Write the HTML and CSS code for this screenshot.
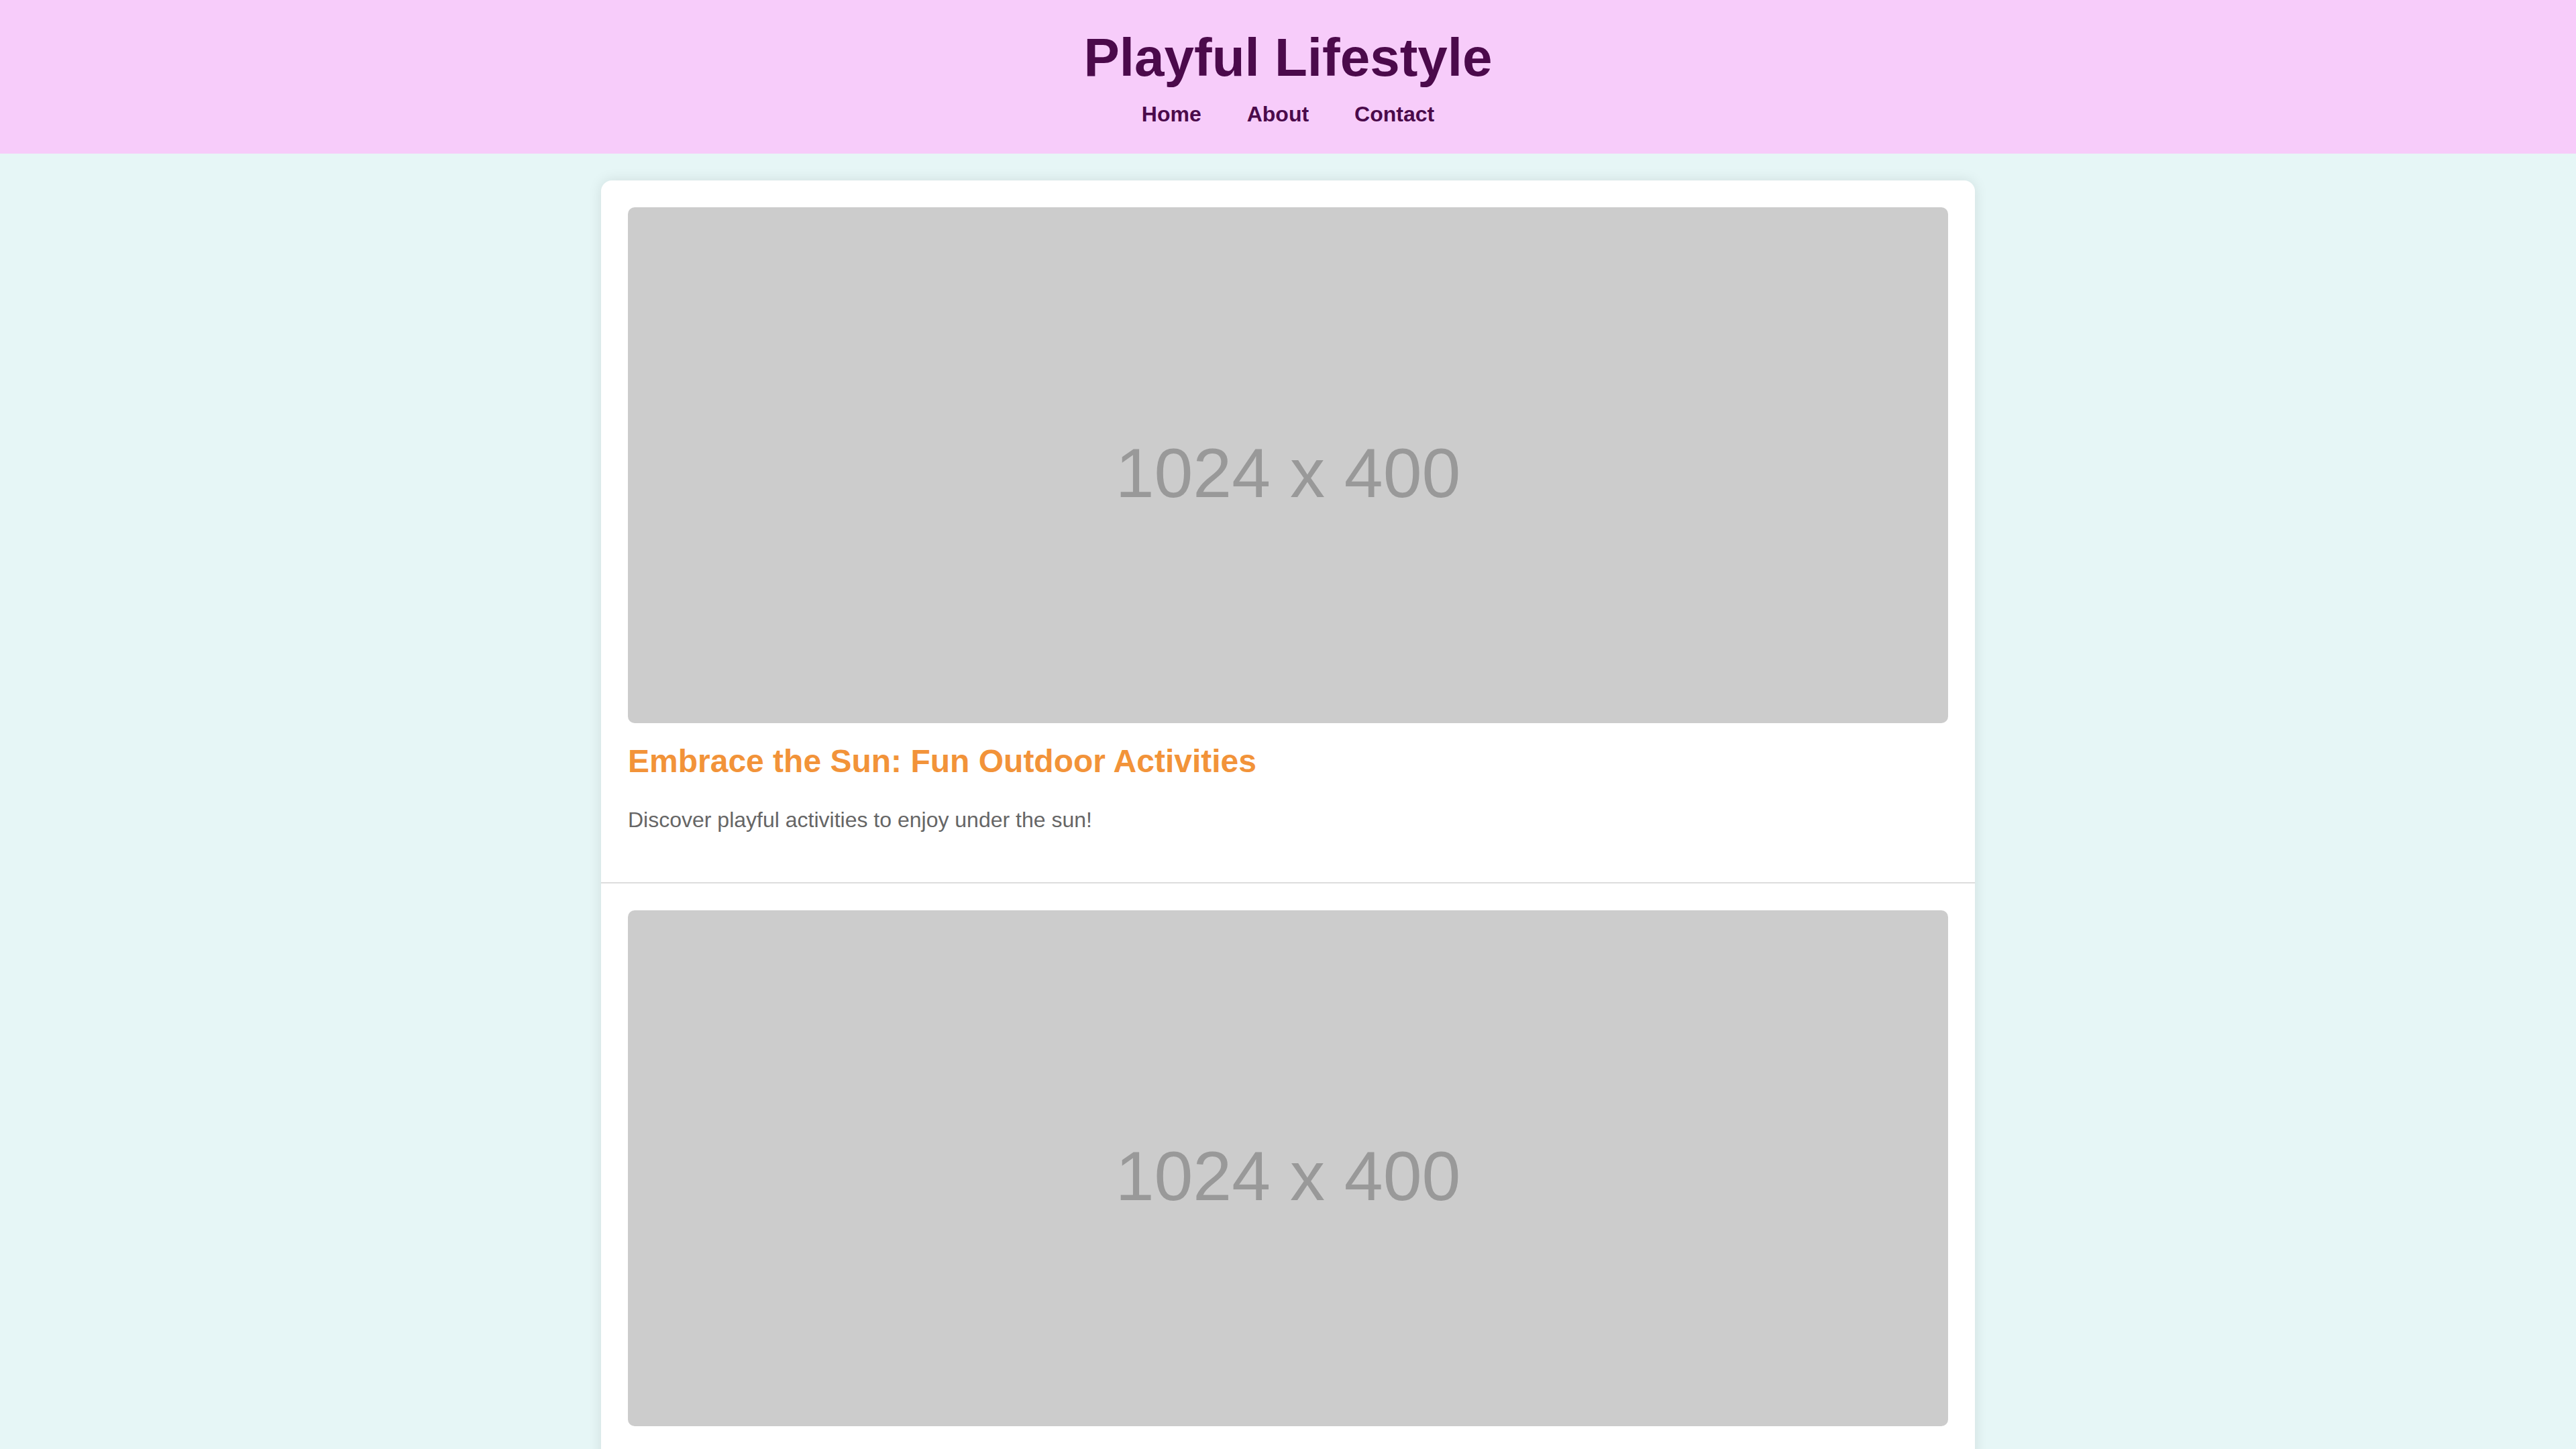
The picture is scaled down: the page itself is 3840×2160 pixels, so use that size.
FILE: index.html
```html
<!DOCTYPE html>
<html lang="en">
<head>
<meta charset="utf-8">
<title>Playful Lifestyle</title>
<link rel="stylesheet" href="styles.css">
</head>
<body>
<header class="site-header">
  <h1 class="site-title">Playful Lifestyle</h1>
  <nav class="site-nav">
    <a href="#" class="nav-link">Home</a>
    <a href="#" class="nav-link">About</a>
    <a href="#" class="nav-link">Contact</a>
  </nav>
</header>
<main class="content">
  <article class="post">
    <div class="placeholder"><span class="placeholder-text">1024 x 400</span></div>
    <h2 class="post-title">Embrace the Sun: Fun Outdoor Activities</h2>
    <p class="post-excerpt">Discover playful activities to enjoy under the sun!</p>
  </article>
  <article class="post">
    <div class="placeholder"><span class="placeholder-text">1024 x 400</span></div>
    <h2 class="post-title">Creative Crafts for Cozy Afternoons</h2>
    <p class="post-excerpt">Simple, colourful projects to brighten up your day.</p>
  </article>
</main>
</body>
</html>
```

FILE: styles.css
```css
html, body {
  margin: 0;
  padding: 0;
}
body {
  background: #e6f6f6;
  font-family: "Liberation Sans", Arial, sans-serif;
  font-size: 32px;
}
.site-header {
  background: #f7ccfa;
  padding: 40px 0;
  text-align: center;
}
.site-title {
  margin: 0 0 20px;
  font-size: 80px;
  line-height: 92px;
  font-weight: 700;
  color: #4b0a4b;
}
.site-nav {
  display: flex;
  justify-content: center;
  gap: 68px;
  line-height: 37px;
}
.nav-link {
  font-size: 32px;
  font-weight: 700;
  color: #4b0a4b;
  text-decoration: none;
}
.content {
  width: 2048px;
  margin: 40px auto 0;
  background: #ffffff;
  border-radius: 16px;
  box-shadow: 0 0 20px rgba(0, 0, 0, 0.1);
  overflow: hidden;
}
.post {
  padding: 40px;
  border-bottom: 2px solid #dddddd;
}
.placeholder {
  height: 769px;
  background: #cccccc;
  border-radius: 10px;
  display: flex;
  align-items: center;
  justify-content: center;
  padding-top: 24px;
  box-sizing: border-box;
}
.placeholder-text {
  font-family: "Liberation Sans", Arial, sans-serif;
  font-size: 104px;
  color: #999999;
}
.post-title {
  margin: 29px 0 0;
  font-size: 48px;
  line-height: 56px;
  font-weight: 700;
  color: #f29339;
}
.post-excerpt {
  margin: 41px 0 34px;
  font-size: 32px;
  line-height: 37px;
  color: #666666;
}
```
